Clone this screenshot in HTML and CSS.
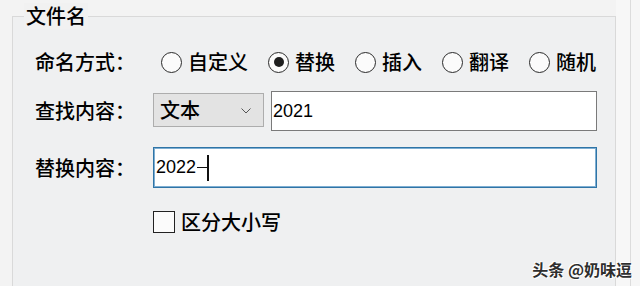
FILE: index.html
```html
<!DOCTYPE html>
<html lang="zh-CN">
<head>
<meta charset="utf-8">
<title>文件名</title>
<link rel="stylesheet" href="styles.css">
</head>
<body>
<div class="screen">
  <div class="main">
    <div class="group">
      <div class="legend">文件名</div>
      <div class="row row-mode">
        <div class="label">命名方式：</div>
        <div class="radios">
          <label class="radio"><span class="circle"></span><span>自定义</span></label>
          <label class="radio checked"><span class="circle"><span class="dot"></span></span><span>替换</span></label>
          <label class="radio"><span class="circle"></span><span>插入</span></label>
          <label class="radio"><span class="circle"></span><span>翻译</span></label>
          <label class="radio"><span class="circle"></span><span>随机</span></label>
        </div>
      </div>
      <div class="row row-find">
        <div class="label">查找内容：</div>
        <div class="select">
          <span class="select-text">文本</span>
          <svg class="chevron" width="10" height="6" viewBox="0 0 10 6"><path d="M0.5 0.5 L5 5 L9.5 0.5" fill="none" stroke="#555" stroke-width="1"/></svg>
        </div>
        <div class="textbox find-box">2021</div>
      </div>
      <div class="row row-replace">
        <div class="label">替换内容：</div>
        <div class="textbox replace-box">2022<span class="caret"><span class="caret-h"></span><span class="caret-v"></span></span></div>
      </div>
      <div class="row row-check">
        <label class="check"><span class="box"></span><span>区分大小写</span></label>
      </div>
    </div>
  </div>
  <div class="side"></div>
  <div class="watermark">头条 @奶味逗</div>
</div>
</body>
</html>
```
FILE: styles.css
```css
html, body {
  margin: 0;
  padding: 0;
}
body {
  width: 640px;
  height: 286px;
  overflow: hidden;
  background: #f3f3f3;
  font-family: "Noto Sans CJK SC", "Noto Sans", sans-serif;
  color: #000;
}
.screen {
  position: relative;
  display: flex;
  width: 640px;
  height: 286px;
}
.main {
  width: 630px;
  height: 286px;
  padding: 16px 0 0 12px;
  box-sizing: border-box;
  display: flex;
  background: linear-gradient(to right, #f3f3f3 0, #f3f3f3 616px, #f7f7f7 616px);
}
.side {
  flex: 1;
  border-left: 1px solid #dcdcdc;
  background: #f6f6f6;
}
.group {
  position: relative;
  width: 604px;
  height: 270px;
  box-sizing: border-box;
  border: 1px solid #d9d9d9;
  border-bottom: none;
  background: #eff0f1;
  padding: 25px 0 0 22px;
  display: flex;
  flex-direction: column;
}
.legend {
  position: absolute;
  top: -14px;
  left: 11px;
  padding: 0 2px;
  background: #f1f1f1;
  font-size: 20px;
  line-height: 26px;
  font-weight: 500;
}
.row {
  display: flex;
  align-items: center;
}
.label {
  width: 118px;
  font-size: 20px;
  line-height: 24px;
  font-weight: 500;
  flex-shrink: 0;
  align-self: center;
}
.row-mode {
  height: 40px;
}
.radios {
  display: flex;
  padding-left: 8px;
  gap: 20px;
}
.radio {
  display: flex;
  align-items: center;
  gap: 6px;
  font-size: 20px;
  line-height: 24px;
  font-weight: 500;
}
.circle {
  width: 21px;
  height: 21px;
  box-sizing: border-box;
  border: 1.5px solid #2a2a2a;
  border-radius: 50%;
  background: #fbfbfb;
  display: flex;
  align-items: center;
  justify-content: center;
}
.dot {
  width: 10px;
  height: 10px;
  border-radius: 50%;
  background: #1e1e1e;
}
.row-find {
  margin-top: 9px;
  height: 40px;
  align-items: flex-start;
}
.select {
  margin-top: 2px;
  width: 111px;
  height: 34px;
  box-sizing: border-box;
  border: 1px solid #adadad;
  background: #e3e3e3;
  display: flex;
  align-items: center;
  justify-content: space-between;
  padding: 0 12px 0 6px;
}
.select-text {
  font-size: 20px;
  line-height: 24px;
  font-weight: 500;
}
.chevron {
  display: block;
  margin-top: 2px;
}
.textbox {
  box-sizing: border-box;
  background: #fff;
  font-family: "Liberation Sans", "Noto Sans", sans-serif;
  font-size: 18px;
  display: flex;
  align-items: center;
}
.find-box {
  margin-left: 7px;
  width: 326px;
  height: 40px;
  border: 1px solid #7a7a7a;
  padding-left: 1px;
}
.row-replace {
  margin-top: 16px;
  height: 41px;
}
.replace-box {
  width: 444px;
  height: 41px;
  border: 1px solid #2f74a6;
  box-shadow: inset 0 0 0 1px #7eaed2;
  padding-left: 2px;
}
.caret {
  display: flex;
  align-items: center;
  height: 26px;
  margin-left: 1px;
}
.caret-h {
  width: 10px;
  height: 1.5px;
  background: #111;
}
.caret-v {
  width: 2px;
  height: 26px;
  background: #111;
}
.row-check {
  margin-top: 22px;
  height: 24px;
  padding-left: 118px;
}
.check {
  display: flex;
  align-items: center;
  gap: 6px;
  font-size: 20px;
  line-height: 24px;
  font-weight: 500;
}
.box {
  width: 22px;
  height: 22px;
  box-sizing: border-box;
  border: 1.5px solid #222;
  background: #fbfbfb;
}
.watermark {
  position: absolute;
  right: 8px;
  bottom: 7px;
  font-size: 16px;
  line-height: 20px;
  font-weight: 700;
  color: #2e2e2e;
  text-shadow: 0 0 1px #fff, 1px 1px 0 #fff, -1px -1px 0 #fff;
  letter-spacing: 0;
}
```
